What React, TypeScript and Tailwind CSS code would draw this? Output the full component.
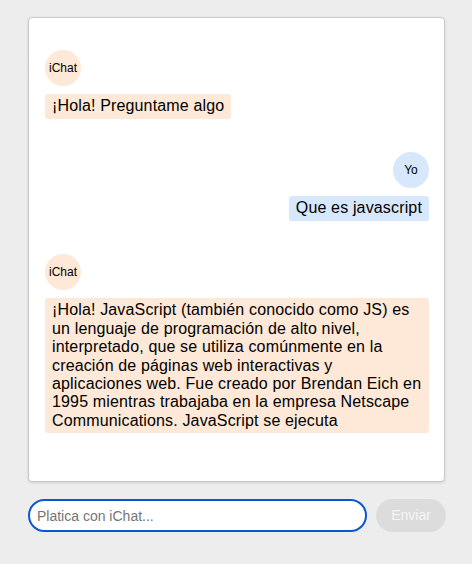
export default function App() {
  const messages = [
    { from: 'bot', text: '¡Hola! Preguntame algo' },
    { from: 'me', text: 'Que es javascript' },
    {
      from: 'bot',
      text: '¡Hola! JavaScript (también conocido como JS) es un lenguaje de programación de alto nivel, interpretado, que se utiliza comúnmente en la creación de páginas web interactivas y aplicaciones web. Fue creado por Brendan Eich en 1995 mientras trabajaba en la empresa Netscape Communications. JavaScript se ejecuta',
    },
  ];

  return (
    <div className="min-h-[564px] bg-[#ededed] pl-[28px] pt-[17px] font-['Liberation_Sans',Arial,sans-serif] text-black">
      <div className="h-[465px] w-[417px] overflow-hidden rounded-[4px] border border-[#c9c9c9] bg-white pl-4 pr-[15px] shadow-[0_1px_3px_rgba(0,0,0,0.12)]">
        {messages.map((m, i) => (
          <div key={i} className={`${i === 0 ? 'mt-8' : 'mt-[33px]'} flex flex-col ${m.from === 'me' ? 'items-end' : 'items-start'}`}>
            <div
              className={`flex h-9 w-9 items-center justify-center rounded-full text-[12px] ${m.from === 'me' ? 'bg-[#d8e8fc]' : 'bg-[#fee9d8]'}`}
            >
              {m.from === 'me' ? 'Yo' : 'iChat'}
            </div>
            <div
              className={`mt-2 rounded-[3px] px-[7px] py-[3.3px] text-[16px] leading-[18.4px] tracking-[0.15px] ${m.from === 'me' ? 'bg-[#d8e8fc]' : 'bg-[#fee9d8]'}`}
            >
              {m.text}
            </div>
          </div>
        ))}
      </div>
      <div className="mt-[17px] flex w-[418px] gap-[9px]">
        <input
          autoFocus
          placeholder="Platica con iChat..."
          className="h-[33px] w-[339px] shrink-0 rounded-full border-2 border-[#0b57d0] bg-white px-[7px] text-[14px] outline-none placeholder:text-[#757575]"
        />
        <button className="h-[33px] w-[70px] shrink-0 rounded-full bg-[#dcdcdc] text-[14px] text-[#f5f5f5]">Enviar</button>
      </div>
    </div>
  );
}
